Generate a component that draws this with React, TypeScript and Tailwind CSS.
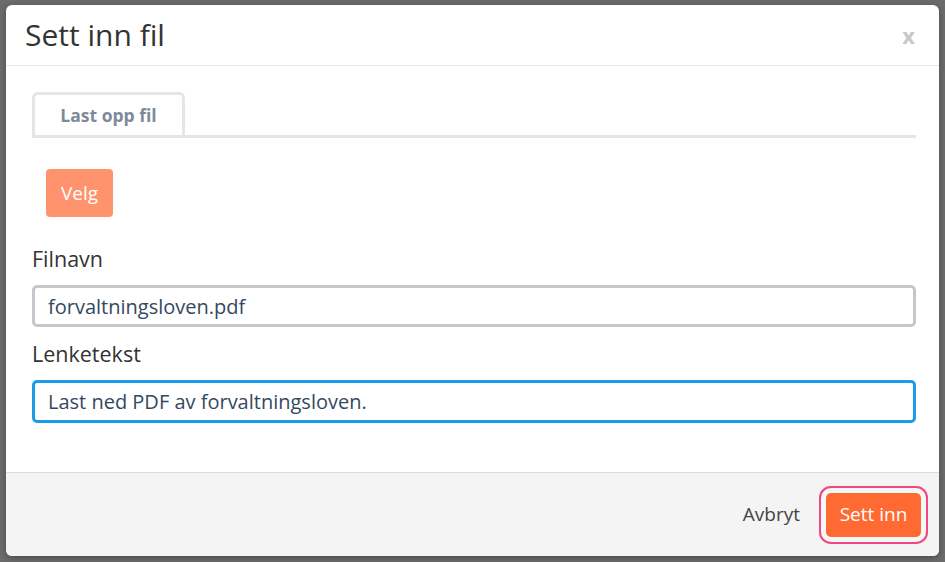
import { useState } from 'react'

export default function App() {
  const [filename, setFilename] = useState('forvaltningsloven.pdf')
  const [linkText, setLinkText] = useState('Last ned PDF av forvaltningsloven.')

  return (
    <div className="h-[562px] w-full overflow-hidden bg-[#6b6b6b] pl-[6px] pt-[5px] font-['Open_Sans',sans-serif]">
      <div className="flex h-[551px] w-[933px] flex-col overflow-hidden rounded-[6px] bg-white shadow-[0_2px_6px_rgba(0,0,0,0.3)]">
        {/* Header */}
        <div className="flex h-[61px] shrink-0 items-center justify-between border-b border-[#e6e6e6] pl-[19px] pr-[24px]">
          <h1 className="text-[30px] leading-none text-[#333]">Sett inn fil</h1>
          <button className="text-[22px] font-bold leading-none text-[#c8c8c8]">x</button>
        </div>

        {/* Body */}
        <div className="flex-1 pl-[26px] pr-[23px] pt-[26px]">
          <div className="flex border-b-[3px] border-[#e3e5e8]">
            <div className="flex h-[43px] w-[153px] items-center justify-center rounded-t-[6px] border-[3px] border-b-0 border-[#e3e5e8] text-[17.5px] font-bold text-[#7d8a99]">
              Last opp fil
            </div>
          </div>

          <button className="ml-[14px] mt-[31px] h-[48px] w-[67px] rounded-[4px] bg-[#ff936e] text-[19px] text-white">
            Velg
          </button>

          <label className="mt-[27px] block text-[21.5px] leading-[30px] text-[#333]">Filnavn</label>
          <input
            value={filename}
            onChange={(e) => setFilename(e.target.value)}
            className="mt-[11px] block h-[42px] w-full rounded-[5px] border-[3px] border-[#c3c8cd] px-[13px] text-[20px] text-[#34495e] outline-none"
          />

          <label className="mt-[12px] block text-[21.5px] leading-[30px] text-[#333]">Lenketekst</label>
          <input
            autoFocus
            value={linkText}
            onChange={(e) => setLinkText(e.target.value)}
            className="mt-[11px] block h-[43px] w-full rounded-[5px] border-[3px] border-[#1b9bec] px-[13px] text-[20px] text-[#34495e] caret-black outline-none"
          />
        </div>

        {/* Footer */}
        <div className="flex h-[84px] shrink-0 items-center justify-end gap-[26px] border-t border-[#dcdcdc] bg-[#f4f4f4] pr-[18px]">
          <button className="text-[19px] text-[#444]">Avbryt</button>
          <button className="h-[44px] w-[95px] rounded-[5px] bg-[#ff6a33] text-[19px] text-white ring-2 ring-[#ef4a80] ring-offset-[5px] ring-offset-[#f6f6f6]">
            Sett inn
          </button>
        </div>
      </div>
    </div>
  )
}
